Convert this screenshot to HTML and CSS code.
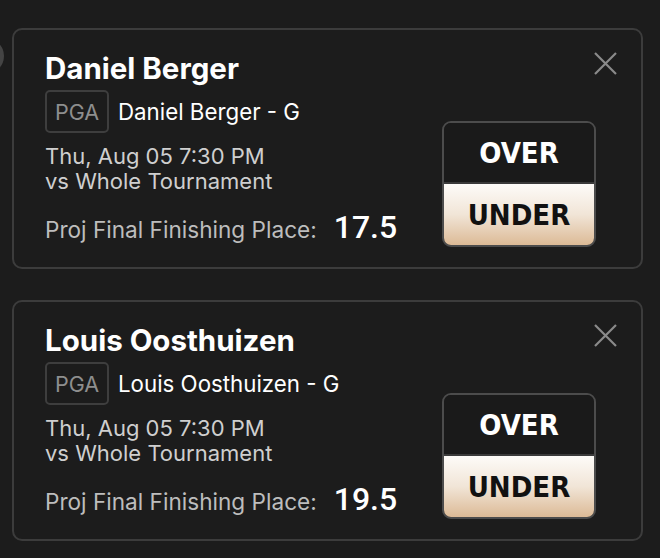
FILE: index.html
```html
<!DOCTYPE html>
<html lang="en">
<head>
  <meta charset="UTF-8" />
  <meta name="viewport" content="width=device-width, initial-scale=1.0">
  <title>Picks</title>
  <link rel="stylesheet" href="styles.css">
</head>
<body>
  <span class="dot"></span>

  <div class="list">
    <!-- tarjeta 1 -->
    <div class="card">
      <div class="info">
        <div class="name">Daniel Berger</div>
        <div class="tag-row">
          <span class="tag">PGA</span>
          <span class="player">Daniel Berger - G</span>
        </div>
        <div class="when">Thu, Aug 05 7:30 PM<br>vs Whole Tournament</div>
        <div class="proj">
          <span class="proj-label">Proj Final Finishing Place:</span>
          <span class="proj-value">17.5</span>
        </div>
      </div>
      <div class="side">
        <div class="pick">
          <button class="pick-btn over">OVER</button>
          <button class="pick-btn under">UNDER</button>
        </div>
      </div>
      <span class="close">
        <svg width="23" height="23" viewBox="0 0 23 23"><path d="M1 1 L22 22 M22 1 L1 22" stroke="#8a8a8a" stroke-width="2.2" fill="none"/></svg>
      </span>
    </div>

    <!-- tarjeta 2 -->
    <div class="card">
      <div class="info">
        <div class="name">Louis Oosthuizen</div>
        <div class="tag-row">
          <span class="tag">PGA</span>
          <span class="player">Louis Oosthuizen - G</span>
        </div>
        <div class="when">Thu, Aug 05 7:30 PM<br>vs Whole Tournament</div>
        <div class="proj">
          <span class="proj-label">Proj Final Finishing Place:</span>
          <span class="proj-value">19.5</span>
        </div>
      </div>
      <div class="side">
        <div class="pick">
          <button class="pick-btn over">OVER</button>
          <button class="pick-btn under">UNDER</button>
        </div>
      </div>
      <span class="close">
        <svg width="23" height="23" viewBox="0 0 23 23"><path d="M1 1 L22 22 M22 1 L1 22" stroke="#8a8a8a" stroke-width="2.2" fill="none"/></svg>
      </span>
    </div>
  </div>
</body>
</html>
```

FILE: styles.css
```css
body {
  font-family: Inter, "Liberation Sans", Arial, sans-serif;
  margin: 0;
  background: #1c1c1c;
  color: #fff;
  overflow: hidden;
}

.dot {
  position: absolute;
  left: -32px;
  top: 38px;
  width: 36px;
  height: 36px;
  border-radius: 50%;
  background: #444;
}

.list {
  padding: 28px 17px 0 12px;
  display: flex;
  flex-direction: column;
  gap: 31px;
}

.card {
  position: relative;
  height: 241px;
  box-sizing: border-box;
  border: 2px solid #3c3c3c;
  border-radius: 10px;
  display: flex;
  justify-content: space-between;
  padding: 20px 45px 20px 31px;
}

.name {
  font-size: 29.5px;
  font-weight: 700;
  line-height: 36px;
}

.tag-row {
  display: flex;
  align-items: center;
  margin-top: 4px;
}
.tag {
  box-sizing: border-box;
  width: 64px;
  height: 43px;
  border: 2px solid #3e3e3e;
  border-radius: 5px;
  color: #8e8e8e;
  font-size: 21.5px;
  display: flex;
  align-items: center;
  justify-content: center;
}
.player {
  margin-left: 9px;
  font-size: 22.3px;
}

.when {
  margin-top: 11px;
  font-size: 22px;
  line-height: 25px;
  color: #cfcfcf;
}

.proj {
  margin-top: 14px;
  display: flex;
  align-items: baseline;
}
.proj-label {
  font-size: 22.6px;
  color: #bdbdbd;
}
.proj-value {
  margin-left: 17px;
  font-family: Roboto, sans-serif;
  font-weight: 500;
  font-size: 32px;
}

.side {
  display: flex;
  align-items: flex-end;
}

.pick {
  box-sizing: border-box;
  width: 154px;
  border: 2px solid #4c4c4c;
  border-radius: 9px;
  overflow: hidden;
  display: flex;
  flex-direction: column;
}
.pick-btn {
  height: 61px;
  border: none;
  padding: 0;
  font-family: "DejaVu Sans Condensed", "DejaVu Sans", sans-serif;
  font-weight: bold;
  font-size: 29px;
  cursor: pointer;
}
.over {
  background: #1a1a1a;
  color: #fff;
  border-bottom: 2px solid #3a3a3a;
}
.under {
  background: linear-gradient(#fdfbf8, #f1e5d7 50%, #dcba96);
  color: #111;
}

.close {
  position: absolute;
  top: 22px;
  right: 24px;
  line-height: 0;
}
```
